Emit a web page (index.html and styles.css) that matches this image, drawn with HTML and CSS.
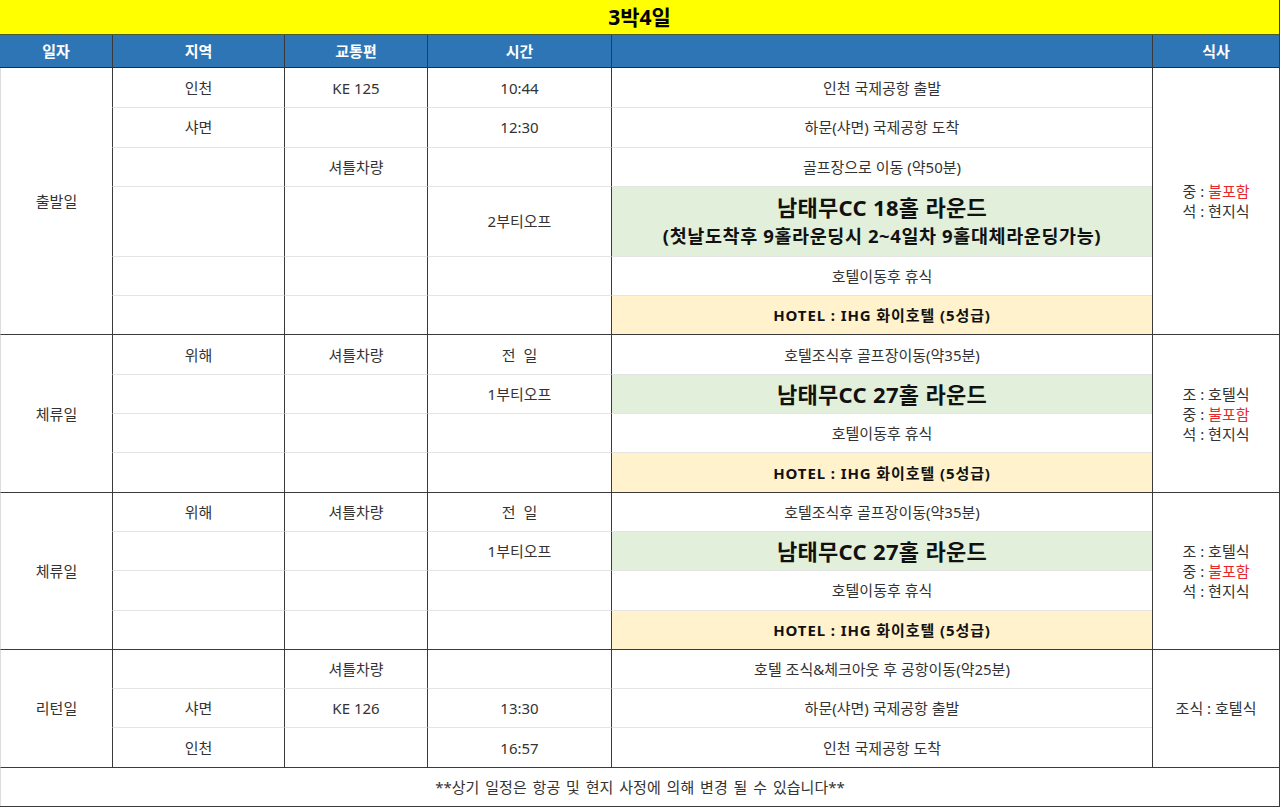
FILE: index.html
```html
<!DOCTYPE html>
<html lang="ko">
<head>
<meta charset="utf-8">
<title>3박4일</title>
<link rel="stylesheet" href="styles.css">
</head>
<body>
<table class="sched">
  <colgroup>
    <col class="c-day"><col class="c-area"><col class="c-trans"><col class="c-time"><col class="c-desc"><col class="c-meal">
  </colgroup>
  <tr class="title"><td colspan="6">3박4일</td></tr>
  <tr class="head"><th class="first">일자</th><th>지역</th><th>교통편</th><th>시간</th><th></th><th>식사</th></tr>

  <tr class="g first-g">
    <td rowspan="6" class="day">출발일</td>
    <td>인천</td><td>KE 125</td><td>10:44</td><td class="desc">인천 국제공항 출발</td>
    <td rowspan="6" class="meal">중 : <span class="red">불포함</span><br>석 : 현지식</td>
  </tr>
  <tr><td>샤면</td><td></td><td>12:30</td><td class="desc">하문(샤면) 국제공항 도착</td></tr>
  <tr><td></td><td>셔틀차량</td><td></td><td class="desc">골프장으로 이동 (약50분)</td></tr>
  <tr class="tall"><td></td><td></td><td>2부티오프</td><td class="desc green"><div class="big">남태무CC 18홀 라운드</div><div class="sub">(첫날도착후 9홀라운딩시 2~4일차 9홀대체라운딩가능)</div></td></tr>
  <tr><td></td><td></td><td></td><td class="desc">호텔이동후 휴식</td></tr>
  <tr><td></td><td></td><td></td><td class="desc hotel">HOTEL : IHG 화이호텔 (5성급)</td></tr>

  <tr class="g">
    <td rowspan="4" class="day">체류일</td>
    <td>위해</td><td>셔틀차량</td><td>전&nbsp;&nbsp;일</td><td class="desc">호텔조식후 골프장이동(약35분)</td>
    <td rowspan="4" class="meal">조 : 호텔식<br>중 : <span class="red">불포함</span><br>석 : 현지식</td>
  </tr>
  <tr><td></td><td></td><td>1부티오프</td><td class="desc green"><div class="big">남태무CC 27홀 라운드</div></td></tr>
  <tr><td></td><td></td><td></td><td class="desc">호텔이동후 휴식</td></tr>
  <tr><td></td><td></td><td></td><td class="desc hotel">HOTEL : IHG 화이호텔 (5성급)</td></tr>

  <tr class="g">
    <td rowspan="4" class="day">체류일</td>
    <td>위해</td><td>셔틀차량</td><td>전&nbsp;&nbsp;일</td><td class="desc">호텔조식후 골프장이동(약35분)</td>
    <td rowspan="4" class="meal">조 : 호텔식<br>중 : <span class="red">불포함</span><br>석 : 현지식</td>
  </tr>
  <tr><td></td><td></td><td>1부티오프</td><td class="desc green"><div class="big">남태무CC 27홀 라운드</div></td></tr>
  <tr><td></td><td></td><td></td><td class="desc">호텔이동후 휴식</td></tr>
  <tr><td></td><td></td><td></td><td class="desc hotel">HOTEL : IHG 화이호텔 (5성급)</td></tr>

  <tr class="g">
    <td rowspan="3" class="day">리턴일</td>
    <td></td><td>셔틀차량</td><td></td><td class="desc">호텔 조식&amp;체크아웃 후 공항이동(약25분)</td>
    <td rowspan="3" class="meal">조식 : 호텔식</td>
  </tr>
  <tr><td>샤면</td><td>KE 126</td><td>13:30</td><td class="desc">하문(샤면) 국제공항 출발</td></tr>
  <tr><td>인천</td><td></td><td>16:57</td><td class="desc">인천 국제공항 도착</td></tr>

  <tr class="g foot"><td colspan="6">**상기 일정은 항공 및 현지 사정에 의해 변경 될 수 있습니다**</td></tr>
</table>
</body>
</html>
```

FILE: styles.css
```css
html, body {
  margin: 0;
  padding: 0;
  background: #ffffff;
}

.sched {
  width: 1279px;
  border-collapse: separate;
  border-spacing: 0;
  table-layout: fixed;
  font-family: "Noto Sans", "Noto Sans CJK KR", sans-serif;
  font-size: 15px;
  color: #333333;
  border-right: 1px solid #3a3a3a;
  border-bottom: 1px solid #3a3a3a;
}

.c-day { width: 112px; }
.c-area { width: 172px; }
.c-trans { width: 143px; }
.c-time { width: 184px; }
.c-desc { width: 541px; }
.c-meal { width: 127px; }

.sched td, .sched th {
  padding: 0;
  text-align: center;
  vertical-align: middle;
  border-top: 1px solid #e4e4e4;
  border-left: 1px solid #3a3a3a;
  height: 39.3px;
  box-sizing: border-box;
  line-height: 20px;
  white-space: nowrap;
}

.sched td.day { border-left-color: #dcdcdc; }

.title td {
  background: #ffff00;
  color: #000;
  font-weight: 700;
  font-size: 21px;
  height: 35px;
  border-top: none;
  border-left: none;
  border-bottom: 1px solid #4a5a2a;
}

.head th {
  background: #2e75b6;
  color: #ffffff;
  font-weight: 700;
  font-size: 15px;
  height: 33px;
  border-top: none;
  border-bottom: 1px solid #2a2a2a;
}
.head th.first { border-left: none; }

.g td { border-top-color: #3a3a3a; }
.day, .meal { border-top-color: #3a3a3a; }
.first-g td { border-top: none; }

.tall td { height: 70px; }

.desc { color: #333333; }

.green { background: #e2efda; color: #111; }
.big { font-size: 22px; font-weight: 700; line-height: 30px; letter-spacing: 0.3px; }
.sub { font-size: 18.5px; font-weight: 700; line-height: 28px; letter-spacing: 0.6px; }

.hotel { background: #fff2cc; color: #111; font-weight: 700; letter-spacing: 0.9px; }

.meal { line-height: 23.5px; }
.red { color: #e8262b; }

.foot td { border-left-color: #dcdcdc; word-spacing: 2px; }
```
